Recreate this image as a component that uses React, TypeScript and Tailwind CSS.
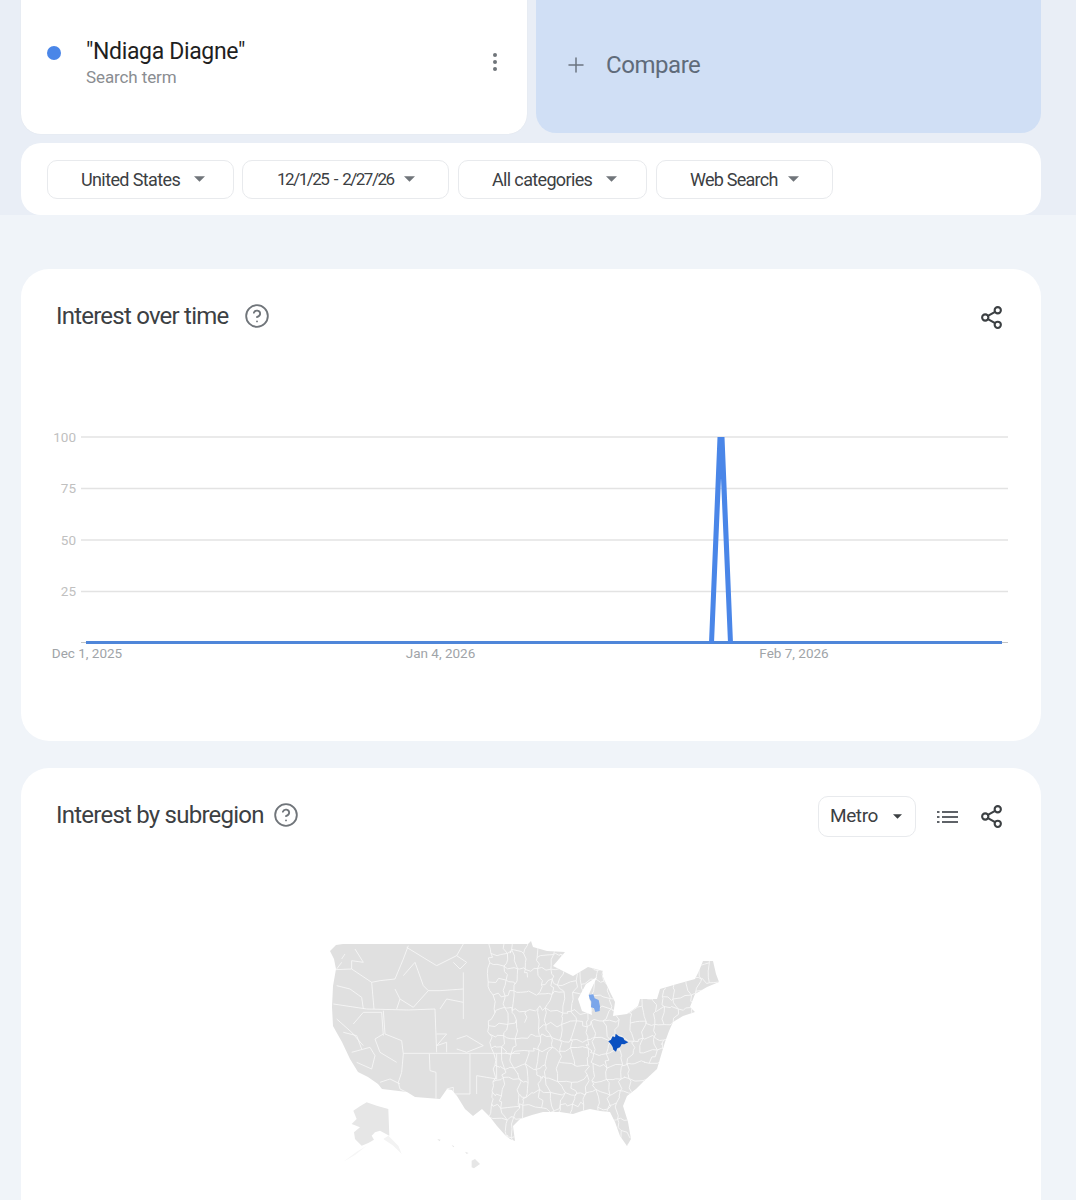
import { CircleHelp, Plus, Share2 } from "lucide-react";

const FONT = "font-['Roboto','Liberation_Sans',sans-serif]";

const filters = [
    { label: "United States", box: "w-[187px] pl-[33px]", text: "text-[18px] tracking-[-0.62px]", gap: "ml-[14px]" },
    { label: "12/1/25 - 2/27/26", box: "ml-[8px] w-[207px] pl-[34px]", text: "text-[17px] tracking-[-1.48px] [word-spacing:2.5px] pt-[1px]", gap: "ml-[10px]" },
    { label: "All categories", box: "ml-[9px] w-[189px] pl-[33px]", text: "text-[18px] tracking-[-0.65px]", gap: "ml-[14px]" },
    { label: "Web Search", box: "ml-[9px] w-[177px] pl-[33px]", text: "text-[18px] tracking-[-0.75px]", gap: "ml-[10px]" },
];

const gridLines = [
    { y: 437, label: "100" },
    { y: 488.5, label: "75" },
    { y: 540, label: "50" },
    { y: 591.5, label: "25" },
];

const Caret = ({ small }: { small?: boolean }) => (
    <svg width={small ? 9 : 11} height={small ? 5 : 6} viewBox="0 0 10 5" className="shrink-0">
        <path d="M0 0h10L5 5z" fill={small ? "#3c4043" : "#70757a"} />
    </svg>
);

const ListIcon = () => (
    <svg width="22" height="14" viewBox="0 0 22 14" className="ml-[21px] shrink-0" fill="#5f6368">
        <rect x="0" y="1" width="2.5" height="2" />
        <rect x="0" y="6" width="2.5" height="2" />
        <rect x="0" y="11" width="2.5" height="2" />
        <rect x="5" y="1" width="16" height="2" />
        <rect x="5" y="6" width="16" height="2" />
        <rect x="5" y="11" width="16" height="2" />
    </svg>
);

// US mainland, traced from the picture in page pixels
const US_OUTLINE =
    "M343 945L336 946L330 952L334 960L336 970L333 987L332 1008L333 1027L338 1036L342 1043L350 1060L358 1073L368 1078L378 1085L382 1090L407 1093L415 1098L440 1100L447 1090L452 1091L457 1097L465 1110L473 1117L482 1110L490 1118L497 1127L505 1136L510 1140L515 1142L513 1127L520 1120L532 1116L543 1113L560 1113L573 1115L582 1112L590 1110L600 1112L610 1113L615 1123L620 1137L627 1147L631 1140L628 1123L623 1107L627 1097L636 1090L643 1083L657 1070L662 1053L665 1043L669 1032L673 1023L683 1017L695 1013L690 1008L695 995L707 988L719 983L716 975L713 962L703 962L699 972L695 980L677 985L660 990L657 1000L640 1000L638 1007L627 1015L613 1017L615 1003L610 993L603 978L603 972L588 968L573 977L553 967L565 953L547 952L533 948L531 942L528 945Z";
const LAKE_MICHIGAN = "M597 978L586 985L578 1000L582 1012L592 1016L589 995Z";

// Western metro borders, in 3x crop coordinates
const westLines = [
    "M105 152L155 150L155 125L190 130L165 90",
    "M100 255L200 270L325 273L405 270",
    "M155 150L215 190L240 185L285 180L310 120L325 80",
    "M215 190L222 270",
    "M285 210L300 240L290 270",
    "M310 170L345 130L370 200L385 215L340 265L300 240",
    "M385 215L420 215L490 210",
    "M490 160L490 300",
    "M405 270L410 400",
    "M250 275L255 345L305 365L310 405L305 460L295 490L300 510L320 520",
    "M250 345L225 360L240 400L290 430",
    "M155 400L210 385L225 410L215 450L170 430",
    "M310 403L660 403",
    "M388 405L390 455L408 460L408 540",
    "M440 510L460 505L460 525L510 525L510 405",
    "M590 405L590 480L530 470L530 525",
    "M410 345L440 345L410 380L440 370L440 400",
    "M470 360L500 350L550 380L500 400L470 390",
    "M320 85L410 140L470 110L490 75",
    "M160 315L190 280L245 280L250 350",
    "M110 200L150 210L185 235L190 270",
    "M110 300L155 340L190 380",
    "M125 120L135 105M110 150L125 130",
    "M240 490L270 480L300 495",
    "M420 270L440 240L490 250",
    "M470 110L500 130L480 150L460 130",
    "M130 340L170 350L185 390",
];

// Central and eastern metros are small and irregular, a jittered mesh reads the same at this size
const buildEastMesh = () => {
    let seed = 23;
    const rnd = () => {
        seed = (seed * 16807) % 2147483647;
        return seed / 2147483647 - 0.5;
    };
    const pts: [number, number][][] = [];
    for (let i = 0; i < 21; i++) {
        const col: [number, number][] = [];
        for (let j = 0; j < 16; j++) {
            col.push([492 + i * 11.5 + rnd() * 9, 940 + j * 14 + rnd() * 9]);
        }
        pts.push(col);
    }
    let d = "";
    const seg = (a: [number, number], b: [number, number]) => {
        const m1x = a[0] + (b[0] - a[0]) / 3 + rnd() * 5;
        const m1y = a[1] + (b[1] - a[1]) / 3 + rnd() * 5;
        const m2x = a[0] + ((b[0] - a[0]) * 2) / 3 + rnd() * 5;
        const m2y = a[1] + ((b[1] - a[1]) * 2) / 3 + rnd() * 5;
        d += `M${a[0].toFixed(1)} ${a[1].toFixed(1)}L${m1x.toFixed(1)} ${m1y.toFixed(1)}L${m2x.toFixed(1)} ${m2y.toFixed(1)}L${b[0].toFixed(1)} ${b[1].toFixed(1)}`;
    };
    pts.forEach((col, i) =>
        col.forEach((p, j) => {
            if (j < col.length - 1 && rnd() > -0.42) seg(p, col[j + 1]);
            if (i < pts.length - 1 && rnd() > -0.36) seg(p, pts[i + 1][j]);
        })
    );
    return d;
};

const UsMap = () => (
    <svg width="420" height="260" viewBox="320 930 420 260" className="block">
        <defs>
            <clipPath id="us">
                <path d={US_OUTLINE} />
            </clipPath>
        </defs>
        <path d={US_OUTLINE} fill="#e0e0e0" />
        <g clipPath="url(#us)" fill="none" stroke="#f8f8f8" strokeWidth="0.85">
            <g transform="translate(300 920) scale(0.3333)" strokeWidth="2.5">
                {westLines.map((d, i) => (
                    <path key={i} d={d} />
                ))}
            </g>
            <path d={buildEastMesh()} />
        </g>
        <path d={LAKE_MICHIGAN} fill="#ffffff" />
        <g transform="translate(510 920) scale(0.3333)">
            <path d="M236 227L250 226L254 238L266 243L270 262L269 276L256 279L252 268L243 265L244 248L239 240Z" fill="#7ba6ea" />
            <path d="M295 367L303 362L308 352L315 355L317 344L327 352L340 356L343 363L355 370L343 376L335 375L330 385L322 388L318 398L310 392L308 384L303 376Z" fill="#0b51c1" />
        </g>
        <g transform="translate(300 920) scale(0.3333)" fill="#e6e6e6">
            <path d="M160 575L180 562L200 550L230 560L265 570L268 650L240 635L225 640L215 650L222 662L205 672L185 680L165 660L162 640L180 625L155 615L170 600Z" />
            <path d="M515 725L525 720L540 735L522 748L515 745Z" />
            <path d="M412 660L422 662L418 667ZM455 678L463 682L460 685ZM495 698L506 702L500 705Z" />
            <path d="M265 650L295 680L305 705L280 680L250 660Z" fill="#f3f3f3" />
            <path d="M200 680L165 708L130 728L170 698Z" fill="#f6f6f6" />
        </g>
    </svg>
);

const TimeChart = () => (
    <svg width="1020" height="272" viewBox="21 420 1020 272" className={`block ${FONT}`}>
        {gridLines.map((g) => (
            <g key={g.y}>
                <line x1="81" x2="1008" y1={g.y} y2={g.y} stroke="#e3e3e3" strokeWidth="1.4" />
                <text x="76" y={g.y + 4.5} textAnchor="end" fontSize="13.5" fill="#c0c0c0">{g.label}</text>
            </g>
        ))}
        <line x1="81" x2="1008" y1="642.5" y2="642.5" stroke="#c4c4c4" strokeWidth="1" />
        <path d="M86 642.5H1002" fill="none" stroke="#4f86d9" strokeWidth="3" />
        <path d="M709 643L717.5 437H724.5L733 643H728L721 478L714 643Z" fill="#4a86e8" />
        <text x="87" y="658" textAnchor="middle" fontSize="13.5" fill="#a0a4a8">Dec 1, 2025</text>
        <text x="440.5" y="658" textAnchor="middle" fontSize="13.5" fill="#a0a4a8">Jan 4, 2026</text>
        <text x="794" y="658" textAnchor="middle" fontSize="13.5" fill="#a0a4a8">Feb 7, 2026</text>
    </svg>
);

export default function App() {
    return (
        <div className={`h-[1200px] w-[1076px] overflow-hidden bg-[#f0f4f9] ${FONT}`}>
            {/* Search term band */}
            <div className="h-[215px] bg-[#e9eef6] pl-[21px] pr-[35px]">
                <div className="flex h-[134px] gap-[9px]">
                    <div className="flex w-[506px] items-start rounded-b-[20px] bg-white pl-[26px] pr-[30px] pt-[37px] shadow-[0_0_1px_#d5dae2]">
                        <span className="mt-[9px] h-[14px] w-[14px] shrink-0 rounded-full bg-[#4a86e8]" />
                        <div className="ml-[25px] flex-1">
                            <div className="mt-[1px] text-[23px] leading-[28px] tracking-[-0.35px] text-[#1f1f1f]">"Ndiaga Diagne"</div>
                            <div className="text-[17px] leading-[22px] tracking-[-0.1px] text-[#8a8d91]">Search term</div>
                        </div>
                        <div className="mt-[16px] flex flex-col gap-[3px]">
                            <span className="h-[4px] w-[4px] rounded-full bg-[#70757a]" />
                            <span className="h-[4px] w-[4px] rounded-full bg-[#70757a]" />
                            <span className="h-[4px] w-[4px] rounded-full bg-[#70757a]" />
                        </div>
                    </div>
                    <div className="flex h-[133px] flex-1 items-center rounded-b-[20px] bg-[#d0dff5] pb-[4px] pl-[28px] text-[#5f6b7a]">
                        <Plus size={24} strokeWidth={1.5} className="text-[#6b7480]" />
                        <span className="ml-[18px] text-[24px] leading-[30px] tracking-[-0.45px]">Compare</span>
                    </div>
                </div>
                <div className="mt-[9px] flex h-[72px] items-center rounded-[20px] bg-white pl-[26px]">
                    {filters.map((f) => (
                        <div
                            key={f.label}
                            className={`flex h-[39px] items-center rounded-[10px] border border-[#e8eaed] text-[#3c4043] ${f.box}`}
                        >
                            <span className={f.text}>{f.label}</span>
                            <span className={f.gap}><Caret /></span>
                        </div>
                    ))}
                </div>
            </div>

            {/* Interest over time */}
            <div className="ml-[21px] mr-[35px] mt-[54px] h-[472px] overflow-hidden rounded-[28px] bg-white">
                <div className="flex h-[151px] items-start justify-between pl-[35px] pr-[37px] pt-[32px]">
                    <div className="flex items-center gap-[16px]">
                        <span className="text-[24px] leading-[30px] tracking-[-0.78px] text-[#3c4043]">Interest over time</span>
                        <CircleHelp size={26} strokeWidth={1.7} className="text-[#70757a]" />
                    </div>
                    <Share2 size={25} strokeWidth={2} className="mt-[4px] text-[#3c4043]" />
                </div>
                <TimeChart />
            </div>

            {/* Interest by subregion */}
            <div className="ml-[21px] mr-[35px] mt-[27px] h-[480px] rounded-[28px] bg-white">
                <div className="flex h-[161px] items-start justify-between pl-[35px] pr-[37px] pt-[28px]">
                    <div className="mt-[4px] flex items-center gap-[9px]">
                        <span className="text-[24px] leading-[30px] tracking-[-0.77px] text-[#3c4043]">Interest by subregion</span>
                        <CircleHelp size={26} strokeWidth={1.7} className="text-[#70757a]" />
                    </div>
                    <div className="flex items-center">
                        <div className="flex h-[41px] w-[98px] items-center rounded-[10px] border border-[#e8eaed] pl-[11px] text-[#3c4043]">
                            <span className="text-[19px] tracking-[-0.4px]">Metro</span>
                            <span className="ml-[15px]"><Caret small /></span>
                        </div>
                        <ListIcon />
                        <span className="ml-[20px]"><Share2 size={25} strokeWidth={2} className="text-[#3c4043]" /></span>
                    </div>
                </div>
                <div className="flex justify-center pr-[2px]">
                    <UsMap />
                </div>
            </div>
        </div>
    );
}
